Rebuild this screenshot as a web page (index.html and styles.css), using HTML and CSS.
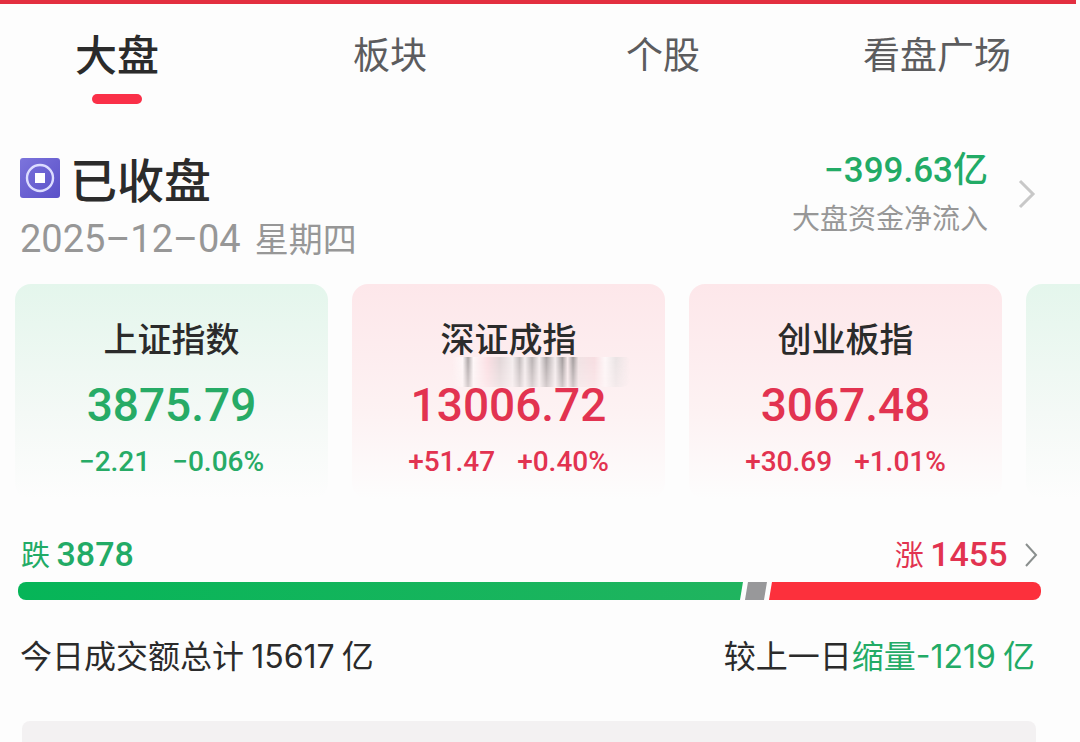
FILE: index.html
```html
<!DOCTYPE html>
<html lang="zh-CN">
<head>
  <meta charset="UTF-8">
  <meta name="viewport" content="width=device-width, initial-scale=1.0">
  <title>大盘</title>
  <link rel="stylesheet" href="styles.css">
</head>
<body>
  <div class="top-line"></div>

  <nav class="tabs">
    <a href="#" class="tab active">大盘</a>
    <a href="#" class="tab">板块</a>
    <a href="#" class="tab">个股</a>
    <a href="#" class="tab">看盘广场</a>
  </nav>

  <header class="summary">
    <div class="status">
      <h1>
        <svg class="status-icon" viewBox="0 0 40 40" aria-hidden="true">
          <defs>
            <linearGradient id="coin" x1="0" y1="0" x2="1" y2="1">
              <stop offset="0" stop-color="#7c74dc"/>
              <stop offset="1" stop-color="#5a50c8"/>
            </linearGradient>
          </defs>
          <rect width="40" height="40" rx="3" fill="url(#coin)"/>
          <circle cx="20" cy="20" r="13" fill="none" stroke="#dcdcff" stroke-width="2.4"/>
          <rect x="15" y="15" width="10" height="10" fill="#fff"/>
        </svg>
        已收盘
      </h1>
      <p class="date"><span class="num">2025–12–04</span><span class="weekday">星期四</span></p>
    </div>
    <a href="#" class="flow">
      <span class="flow-text">
        <strong class="down"><span class="num">−399.63</span>亿</strong>
        <span class="flow-label">大盘资金净流入</span>
      </span>
      <svg class="arrow" viewBox="0 0 18 30" aria-hidden="true">
        <path d="M2 2 L15 15 L2 28" fill="none" stroke="#c8c8c8" stroke-width="3"/>
      </svg>
    </a>
  </header>

  <main>
    <section class="cards">
      <article class="card card-down">
        <h2>上证指数</h2>
        <p class="price">3875.79</p>
        <p class="change"><span>−2.21</span><span>−0.06%</span></p>
      </article>
      <article class="card card-up">
        <h2>深证成指</h2>
        <div class="smudge"></div>
        <p class="price">13006.72</p>
        <p class="change"><span>+51.47</span><span>+0.40%</span></p>
      </article>
      <article class="card card-up">
        <h2>创业板指</h2>
        <p class="price">3067.48</p>
        <p class="change"><span>+30.69</span><span>+1.01%</span></p>
      </article>
      <article class="card card-down"></article>
    </section>

    <section class="breadth">
      <div class="counts">
        <p class="down">跌 <span class="num">3878</span></p>
        <a href="#" class="up">涨 <span class="num">1455</span>
          <svg class="arrow-small" viewBox="0 0 14 26" aria-hidden="true">
            <path d="M2 2 L12 13 L2 24" fill="none" stroke="#8a8f8e" stroke-width="2"/>
          </svg>
        </a>
      </div>
      <div class="bar">
        <span class="bar-down"></span>
        <span class="bar-flat"></span>
        <span class="bar-up"></span>
      </div>
    </section>

    <section class="turnover">
      <p>今日成交额总计 <span class="amount">15617</span> 亿</p>
      <p>较上一日<span class="down">缩量<span class="amount">-1219</span> 亿</span></p>
    </section>

    <div class="panel"></div>
  </main>
</body>
</html>
```
FILE: styles.css
```css
* {
  box-sizing: border-box;
}
body {
  display: flex;
  flex-direction: column;
  margin: 0;
  min-height: 100vh;
  background-color: #fdfdfd;
  color: #2b2b2b;
  font-family: "Noto Sans CJK SC", sans-serif;
}
main {
  display: flex;
  flex-direction: column;
  flex: 1;
}
h1, h2, p {
  margin: 0;
  font-weight: 500;
}
a {
  color: inherit;
  text-decoration: none;
}
.num, .price, .change {
  font-family: Roboto, "Noto Sans CJK SC", sans-serif;
  font-weight: 500;
}
.down {
  color: #22ab66;
}
.up {
  color: #e23350;
}
.top-line {
  height: 4px;
  margin-right: 4px;
  background-color: #e32f40;
}

/* tabs */
.tabs {
  display: flex;
  justify-content: space-between;
  padding: 24px 69px 0 44px;
}
.tab {
  display: flex;
  flex-direction: column;
  align-items: center;
  min-width: 146px;
  height: 76px;
  font-size: 37px;
  line-height: 50px;
  color: #5c5c5e;
}
.tab.active {
  font-size: 42px;
  font-weight: 500;
  color: #2b2b2b;
}
.tab.active::after {
  content: "";
  width: 50px;
  height: 10px;
  margin-top: 16px;
  border-radius: 5px;
  background-color: #fa3048;
}

/* market status */
.summary {
  display: flex;
  justify-content: space-between;
  padding: 44px 44px 0 20px;
}
h1 {
  display: flex;
  align-items: center;
  gap: 10px;
  font-size: 47px;
  line-height: 60px;
}
.status-icon {
  width: 40px;
  height: 40px;
}
.date {
  display: flex;
  align-items: baseline;
  gap: 14px;
  padding-top: 2px;
  font-size: 34px;
  line-height: 56px;
  color: #979797;
}
.date .num {
  font-size: 38px;
  font-weight: 400;
}
.weekday {
  font-weight: 400;
}
.flow {
  display: flex;
  align-items: center;
  gap: 30px;
  height: 92px;
}
.flow-text {
  display: flex;
  flex-direction: column;
  align-items: flex-end;
  padding-bottom: 6px;
}
.flow strong {
  font-size: 35px;
  font-weight: 500;
  line-height: 48px;
}
.flow-label {
  font-size: 28px;
  line-height: 44px;
  color: #979797;
}
.arrow {
  width: 18px;
  height: 30px;
}

/* index cards */
.cards {
  display: flex;
  gap: 24px;
  margin-top: 17px;
  padding-left: 15px;
  overflow: hidden;
}
.card {
  position: relative;
  flex: 0 0 313px;
  height: 215px;
  padding-top: 32px;
  border-radius: 16px;
  text-align: center;
}
.card-down {
  color: #27ab66;
  background: linear-gradient(#e4f6ec, #f4f9f6 60%, #fdfdfd);
}
.card-up {
  color: #e23350;
  background: linear-gradient(#fde7ea, #fdf2f3 60%, #fdfdfd);
}
.card h2 {
  font-size: 34px;
  line-height: 44px;
  color: #2b2b2b;
}
.price {
  margin-top: 16px;
  font-size: 46px;
  line-height: 58px;
}
.change {
  display: flex;
  justify-content: center;
  gap: 22px;
  margin-top: 10px;
  font-size: 28px;
  line-height: 36px;
}
.smudge {
  position: absolute;
  top: 73px;
  left: 100px;
  width: 178px;
  height: 30px;
  border-radius: 4px 4px 8px 8px;
  background: linear-gradient(90deg, transparent, #fff 6%, #777 9%, #fff 12%, #f9d5db 20%, #cfc7c8 27%, #eee 34%, #999 38%, #eee 41%, #888 45%, #eee 49%, #777 53%, #eee 58%, #666 62%, #f5eaeb 65%, #666 68%, #e8dcdd 71%, #f3d3d8 80%, #fff 86%, #ddd 92%, transparent);
  opacity: 0.6;
  -webkit-mask-image: linear-gradient(#000, rgba(0, 0, 0, 0.5));
  mask-image: linear-gradient(#000, rgba(0, 0, 0, 0.5));
}

/* falling / rising */
.breadth {
  padding: 32px 39px 0 18px;
}
.counts {
  display: flex;
  justify-content: space-between;
  padding: 0 3px;
  font-size: 29px;
  line-height: 44px;
}
.counts p {
  font-weight: 400;
}
.counts .num {
  font-size: 34px;
}
.arrow-small {
  width: 14px;
  height: 26px;
  margin-left: 10px;
  vertical-align: -2px;
}
.bar {
  display: flex;
  gap: 2px;
  height: 18px;
  margin-top: 6px;
  border-radius: 8px;
  overflow: hidden;
}
.bar-down {
  flex: 3878;
  background: linear-gradient(90deg, #06b558, #20b45f);
  clip-path: polygon(0 0, 100% 0, calc(100% - 3px) 100%, 0 100%);
}
.bar-flat {
  flex: 0 0 22px;
  background-color: #98989a;
  clip-path: polygon(3px 0, 100% 0, calc(100% - 3px) 100%, 0 100%);
}
.bar-up {
  flex: 1455;
  background-color: #fc303c;
  clip-path: polygon(3px 0, 100% 0, 100% 100%, 0 100%);
}

/* turnover */
.turnover {
  display: flex;
  justify-content: space-between;
  padding: 30px 45px 0 20px;
  font-size: 32px;
  line-height: 48px;
}
.turnover p {
  font-weight: 400;
}
.amount {
  font-family: Inter, "Liberation Sans", sans-serif;
}
.panel {
  flex: 1;
  min-height: 20px;
  margin: 40px 44px 0 22px;
  border-radius: 8px 8px 0 0;
  background-color: #f3f1f2;
}
```
